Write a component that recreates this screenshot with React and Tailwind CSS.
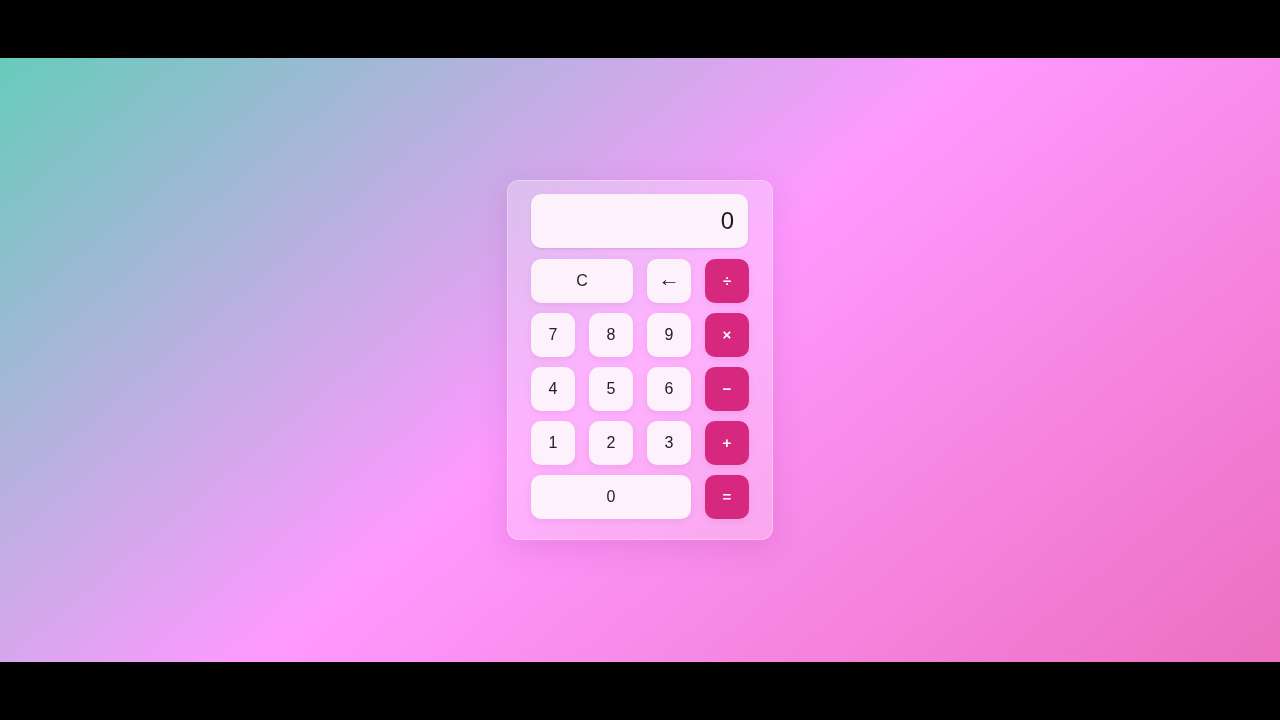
import { useState } from 'react';

const keys = [
  { label: 'C', span: 'col-span-2', kind: 'fn' },
  { label: '←', kind: 'fn' },
  { label: '÷', kind: 'op' },
  { label: '7' },
  { label: '8' },
  { label: '9' },
  { label: '×', kind: 'op' },
  { label: '4' },
  { label: '5' },
  { label: '6' },
  { label: '−', kind: 'op' },
  { label: '1' },
  { label: '2' },
  { label: '3' },
  { label: '+', kind: 'op' },
  { label: '0', span: 'col-span-3' },
  { label: '=', kind: 'op' },
];

export default function App() {
  const [value] = useState('0');

  return (
    <div className="h-screen flex flex-col bg-black font-['Liberation_Sans',Arial,sans-serif]">
      <div className="h-[58px] bg-black" />
      <div className="flex-1 flex items-center justify-center bg-[linear-gradient(140deg,#66ccbb_0%,#ff99ff_49%,#ec6fc0_100%)]">
        {/* Calculator */}
        <div className="w-[266px] rounded-xl border border-white/30 bg-white/25 px-[23px] pt-[13px] pb-[20px] shadow-[0_8px_30px_rgba(120,40,120,0.15)] backdrop-blur-md">
          <div className="h-[54px] mb-[11px] mr-px rounded-[10px] bg-[#fdf1fc] shadow-sm flex items-center justify-end pr-[14px] text-[24px] text-[#1a1a1a]">
            {value}
          </div>
          <div className="grid grid-cols-4 gap-x-[14px] gap-y-[10px]">
            {keys.map((k) => (
              <button
                key={k.label}
                className={
                  'h-[44px] rounded-[10px] flex items-center justify-center shadow-[0_2px_6px_rgba(150,60,140,0.12)] ' +
                  (k.span ? k.span + ' ' : '') +
                  (k.kind === 'op'
                    ? 'bg-[#d6287e] text-white text-[15px] font-bold'
                    : 'bg-[#fdf1fc] text-[#222] text-[16px]')
                }
              >
                {k.label === '←' ? (
                  <span className="text-[20px] leading-none -mt-[5px] scale-x-110">←</span>
                ) : (
                  k.label
                )}
              </button>
            ))}
          </div>
        </div>
      </div>
      <div className="h-[58px] bg-black" />
    </div>
  );
}
